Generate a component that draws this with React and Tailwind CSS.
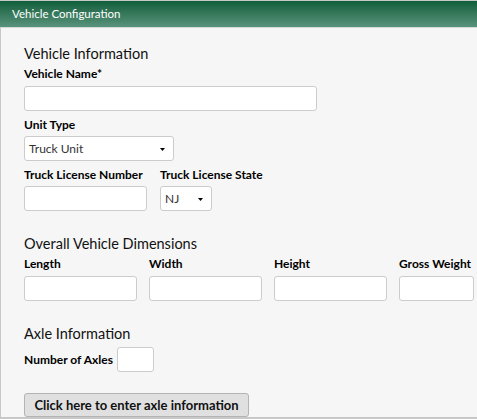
const inputCls =
  "h-[25px] rounded-[3px] border border-[#cccccc] bg-white px-1 text-[12px] outline-none";

const Label = ({ children }) => (
  <div className="text-[12px] font-bold leading-[14px] text-black">{children}</div>
);

const Heading = ({ children }) => (
  <div className="text-[14.5px] leading-[18px] text-[#111]">{children}</div>
);

// small dropdown box with the little black triangle on the right
const Select = ({ value, width }) => (
  <div className={`${inputCls} ${width} flex items-center justify-between pl-[4px] pr-[8px] text-[#333]`}>
    <span>{value}</span>
    <svg width="5" height="3" viewBox="0 0 5 3" className="mt-[2px]">
      <path d="M0 0h5L2.5 3z" fill="#000" />
    </svg>
  </div>
);

export default function App() {
  return (
    <div
      className="h-[419px] w-[477px] overflow-hidden bg-white"
      style={{ fontFamily: "Lato, 'Noto Sans', sans-serif" }}
    >
      <div className="flex h-[419px] flex-col border-t border-[#c8c8c8]">
        <div className="flex h-[26px] shrink-0 items-center bg-gradient-to-b from-[#0c5f3c] to-[#58937c] pl-3 text-[11.5px] text-white">
          Vehicle Configuration
        </div>
        <div className="min-h-0 flex-1 overflow-hidden border-t border-[#d8d8d8] border-l border-l-[#c8c8c8] border-b-2 border-b-[#c8c8c8] bg-[#f6f6f6] pl-[23px] pt-[17px]">
          <Heading>Vehicle Information</Heading>
          <div className="mt-[4px]">
            <Label>Vehicle Name*</Label>
          </div>
          <input className={`${inputCls} mt-[5px] w-[293px]`} />

          <div className="mt-[7px]">
            <Label>Unit Type</Label>
          </div>
          <div className="mt-[4px]">
            <Select value="Truck Unit" width="w-[150px]" />
          </div>

          <div className="mt-[7px] flex gap-[13px]">
            <div>
              <Label>Truck License Number</Label>
              <input className={`${inputCls} mt-[4px] w-[123px]`} />
            </div>
            <div>
              <Label>Truck License State</Label>
              <div className="mt-[4px]">
                <Select value="NJ" width="w-[52px]" />
              </div>
            </div>
          </div>

          <div className="mt-[24px]">
            <Heading>Overall Vehicle Dimensions</Heading>
          </div>
          <div className="mt-[4px] flex gap-[12px]">
            {["Length", "Width", "Height"].map((l) => (
              <div key={l}>
                <Label>{l}</Label>
                <input className={`${inputCls} mt-[5px] w-[113px]`} />
              </div>
            ))}
            <div className="shrink-0">
              <Label>Gross Weight</Label>
              <input className={`${inputCls} mt-[5px] w-[75px]`} />
            </div>
          </div>

          <div className="mt-[24px]">
            <Heading>Axle Information</Heading>
          </div>
          <div className="mt-[4px] flex items-center gap-[4px]">
            <Label>Number of Axles</Label>
            <input className={`${inputCls} w-[37px]`} />
          </div>

          <button className="mt-[21px] h-[24px] w-[225px] rounded-[3px] border border-[#b4b4b4] bg-[#e0e0e0] text-[13px] font-bold leading-none text-[#111]">
            Click here to enter axle information
          </button>
        </div>
      </div>
    </div>
  );
}
